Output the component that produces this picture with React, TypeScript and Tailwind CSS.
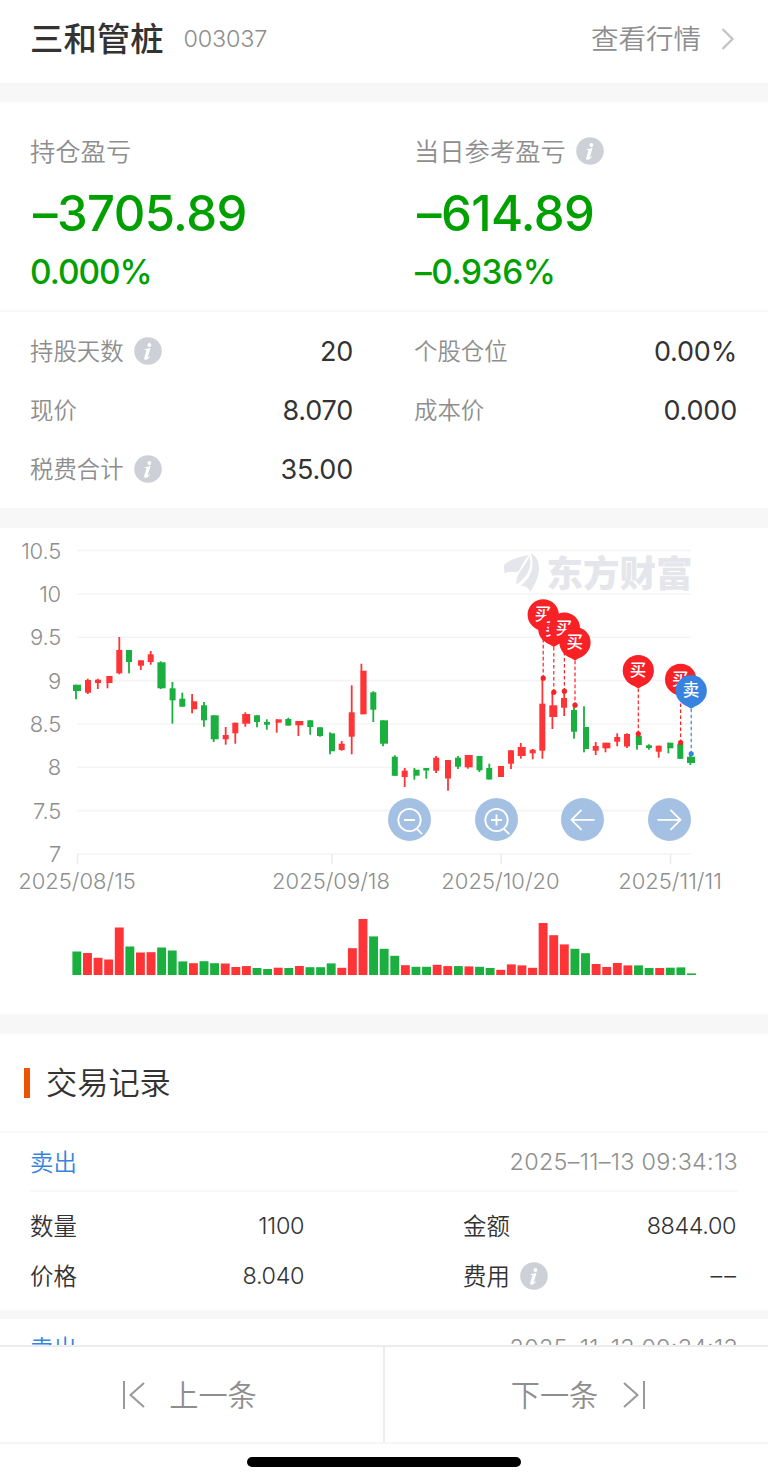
import type { ReactNode } from 'react';

const RED = '#ff3436';
const GREEN = '#1aaf3e';

type Candle = {
    c: 'r' | 'g';
    x: number; // left edge of the body
    w: number;
    open: number;
    close: number;
    wick: number;
    high: number;
    low: number;
};

const candle = (c: 'r' | 'g', x: number, w: number, open: number, close: number, wick: number, high: number, low: number): Candle =>
    ({ c, x, w, open, close, wick, high, low });

const candles: Candle[] = [
    candle('g', 73, 8, 684.7, 691, 76, 684.7, 699.3),
    candle('r', 85, 6, 680, 692.7, 87.8, 678.7, 694),
    candle('r', 95, 6, 679.7, 683, 97.8, 678.7, 689),
    candle('r', 106.5, 6, 676, 683, 107.5, 676, 688.3),
    candle('r', 116.3, 6, 650, 673.3, 119.3, 637, 674.3),
    candle('g', 126, 6, 650, 662, 129, 650, 673.3),
    candle('r', 138, 6, 660.3, 665.7, 140.8, 660.3, 670),
    candle('r', 147.7, 6, 654.3, 662, 150.7, 651, 664.7),
    candle('g', 157.4, 8.2, 662.3, 688.3, 160.7, 661.3, 689),
    candle('g', 169.6, 6, 688.3, 700.3, 172.4, 682, 723.7),
    candle('g', 179.3, 6, 698.7, 706.7, 182.3, 692.7, 706.7),
    candle('r', 191.5, 5.7, 701.3, 709.3, 192.1, 694, 713.3),
    candle('g', 201, 6, 705.3, 720.3, 203.9, 702, 726.7),
    candle('g', 210.7, 8, 715.3, 739.3, 213.7, 715.3, 742),
    candle('r', 222.7, 6, 735, 739.3, 225.7, 727, 744.7),
    candle('r', 232.3, 6, 722.7, 733.3, 235.3, 722.7, 743.7),
    candle('r', 242.2, 8, 714, 723.7, 245.3, 712.3, 726.7),
    candle('g', 254, 6, 715.3, 722, 257, 715.3, 727.3),
    candle('g', 264, 6, 722, 724.7, 266.8, 719.3, 729.7),
    candle('r', 275.7, 6, 719.3, 722.7, 276.7, 719.3, 732.7),
    candle('g', 285.3, 6, 719, 725.6, 288.3, 717.7, 725.6),
    candle('r', 295.3, 8, 721, 725.3, 298.4, 721, 736),
    candle('g', 307.3, 6, 720.3, 727, 310.2, 720.3, 734.7),
    candle('g', 317, 6, 727.3, 736, 320, 727.3, 736.7),
    candle('g', 329, 6, 733.3, 751.3, 330, 732.3, 754.3),
    candle('r', 338.7, 6, 743.7, 750, 341.7, 741, 750.7),
    candle('r', 348.7, 6, 712.3, 736.7, 351.7, 685.3, 754.3),
    candle('r', 360.6, 6, 670.7, 714.3, 361.4, 663.7, 714.3),
    candle('g', 370.3, 6, 692.3, 709.7, 373.3, 691.3, 722),
    candle('g', 380, 8, 720.3, 743.7, 383, 720.3, 746.3),
    candle('g', 391.8, 6, 756.7, 775.8, 394.8, 755.3, 775.8),
    candle('r', 401.7, 6, 770.7, 777, 404.7, 768, 787),
    candle('g', 413.6, 6, 769.7, 775.7, 414.4, 768, 779.7),
    candle('g', 423.3, 6, 768, 770.5, 426.3, 768, 778.7),
    candle('r', 433.2, 6, 757.7, 770.7, 436.1, 756, 773),
    candle('r', 445, 6, 760, 778.5, 448, 760, 790.7),
    candle('g', 455, 6, 757.7, 766.7, 458, 756, 769),
    candle('r', 464.7, 8, 755, 767.3, 467.8, 755, 768.7),
    candle('g', 476.5, 6, 756, 770.3, 479.4, 756, 772),
    candle('g', 486.2, 6, 768, 779.5, 489.3, 763.7, 779.5),
    candle('r', 498, 6, 766, 777, 501, 766, 777),
    candle('r', 508, 6, 750.3, 763.7, 511, 750.3, 769),
    candle('r', 517.7, 8, 747, 756, 520.8, 743, 758.7),
    candle('r', 529.7, 6, 749.7, 753.3, 532.7, 749, 759.3),
    candle('r', 539.3, 6, 703.7, 750.7, 542.4, 679, 758.7),
    candle('r', 549.3, 8, 705.3, 717, 552.4, 693, 729),
    candle('r', 561, 6, 698, 707.7, 564.2, 691, 716),
    candle('g', 571, 6, 710, 731.7, 574, 706, 738.7),
    candle('g', 583, 6, 727, 749, 584, 706.3, 752.3),
    candle('r', 592.7, 6, 746, 750.7, 595.7, 742, 755),
    candle('r', 602.4, 8, 742.7, 748.3, 605.5, 742.7, 752.3),
    candle('r', 614.2, 6, 737, 741.7, 617.2, 733.3, 746.3),
    candle('r', 624, 6, 734, 746.5, 627, 733.3, 748),
    candle('g', 635.8, 6, 735.7, 745, 637, 735.7, 749.7),
    candle('g', 646, 6, 745.3, 748, 648.9, 744.3, 749.7),
    candle('r', 655.7, 6, 745.7, 751.7, 658.7, 745.7, 757.7),
    candle('g', 667.4, 6, 742.7, 748.3, 668.4, 742.7, 753.3),
    candle('g', 677.3, 6, 743.7, 758.8, 680.5, 742, 758.8),
    candle('g', 687, 8, 756.7, 763, 690.3, 755.7, 765),
];

const volumes = [
    23.5, 22, 17.2, 15.5, 47.5, 28.5, 22.5, 22.8, 27.5, 24.5, 13.6, 11.8, 13.8, 11.8, 11.5, 8, 8.9, 7, 6, 7.3,
    7, 9, 7.8, 7.8, 11.6, 7.2, 26.8, 56, 38.6, 26.2, 19.2, 9.8, 8.2, 8.2, 10.2, 8.9, 8.9, 8.6, 8.2, 7,
    5.2, 10.6, 9.6, 7.2, 52, 39.8, 30.6, 26.2, 21.8, 11, 8, 12, 9.6, 9.6, 7, 7, 7.3, 7.6, 1.6,
];

const priceTicks = [
    { label: '10.5', y: 550.5 },
    { label: '10', y: 594 },
    { label: '9.5', y: 637.3 },
    { label: '9', y: 680.6 },
    { label: '8.5', y: 724 },
    { label: '8', y: 767.3 },
    { label: '7.5', y: 810.6 },
    { label: '7', y: 854 },
];

const dateTicks = [
    { label: '2025/08/15', tick: 77.5, x: 77 },
    { label: '2025/09/18', tick: 332, x: 331 },
    { label: '2025/10/20', tick: 501, x: 500.5 },
    { label: '2025/11/11', tick: 670.5, x: 670 },
];

// y = pin centre, dot = price of the trade
const trades = [
    { text: '买', x: 543.2, y: 614.8, dot: 678.2, color: '#f82126' },
    { text: '买', x: 553.8, y: 629, dot: 692.2, color: '#f82126' },
    { text: '买', x: 564.4, y: 628, dot: 691.2, color: '#f82126' },
    { text: '买', x: 575, y: 642.6, dot: 705.2, color: '#f82126' },
    { text: '买', x: 638.3, y: 670.6, dot: 733.8, color: '#f82126' },
    { text: '买', x: 680.6, y: 679.4, dot: 742.5, color: '#f82126' },
    { text: '卖', x: 691.2, y: 690.7, dot: 753.8, color: '#3883e0' },
];

function InfoIcon() {
    return (
        <svg viewBox="0 0 28 28" className="size-7 shrink-0">
            <circle cx="14" cy="14" r="13.8" fill="#cdd0d6" />
            <circle cx="15.4" cy="8" r="1.9" fill="#fff" />
            <path d="M10.6 12c1.8-.1 3.4-.5 5.4-1l.5.2-2.7 8.8c-.2.9.3.8 1.8-.9l.5.4c-1.6 2.2-3 3.3-4.4 3.3-1.3 0-1.8-.9-1.4-2.4l1.9-6.2c.3-1.1 0-1.5-1.6-1.5z" fill="#fff" />
        </svg>
    );
}

function StockChart() {
    return (
        <svg viewBox="0 528 768 486" width="768" height="486" className="block">
            {/* Axes */}
            {priceTicks.map((t) => (
                <g key={t.label}>
                    <line x1="77" x2="691" y1={t.y} y2={t.y} stroke="#f4f4f5" strokeWidth="1.6" />
                    <text x="61" y={t.y + 8} textAnchor="end" fontSize="22" fontWeight="350" letterSpacing="-0.2" fill="#8e8e8e">{t.label}</text>
                </g>
            ))}
            {dateTicks.map((t) => (
                <g key={t.label}>
                    <line x1={t.tick} x2={t.tick} y1="854" y2="864" stroke="#ececee" strokeWidth="1.6" />
                    <text x={t.x} y="889" textAnchor="middle" fontSize="22" fontWeight="350" fill="#8e8e8e">{t.label}</text>
                </g>
            ))}

            {/* Watermark */}
            <g fill="#e5e6eb">
                <path d="M504 565C510 559 521 556.5 529 555C524 560 522 566 518.5 571.5C514 573 509 570.5 504.5 573.5Z" />
                <path d="M529.5 556C527 565 516.5 571 516 584.5C526.5 578 533 568 529.5 556Z" />
                <path d="M531 553.5C536.5 556 539.5 562 539 570C538 580 533 587 530.5 592C528 586.5 524 585.5 520.5 586C531 578 535 566 531 553.5Z" />
                <text x="546.5" y="587" fontSize="36.5" fontWeight="900">东方财富</text>
            </g>

            {candles.map((k, i) => (
                <g key={i} fill={k.c === 'r' ? RED : GREEN}>
                    <rect x={k.wick - 0.9} y={k.high} width="1.8" height={k.low - k.high} />
                    <rect x={k.x} y={k.open} width={k.w} height={k.close - k.open} />
                </g>
            ))}

            {volumes.map((v, i) => (
                <rect key={i} x={72.4 + i * 10.597} y={975 - v} width="8.9" height={v} fill={candles[i].c === 'r' ? RED : GREEN} />
            ))}

            {/* Buy and sell pins */}
            {trades.map((t) => (
                <g key={t.x}>
                    <line x1={t.x} x2={t.x} y1={t.y + 18} y2={t.dot} stroke={t.color} strokeWidth="1.2" strokeDasharray="3.6 2.4" />
                    <circle cx={t.x} cy={t.dot} r="2.6" fill={t.color} />
                </g>
            ))}
            {trades.map((t) => (
                <g key={t.x}>
                    <circle cx={t.x} cy={t.y} r="15.6" fill={t.color} />
                    <path d={`M${t.x - 8} ${t.y + 13.2}L${t.x} ${t.y + 18}L${t.x + 8} ${t.y + 13.2}z`} fill={t.color} />
                    <text x={t.x - 0.3} y={t.y + 5.6} textAnchor="middle" fontSize="16.5" fontWeight="500" fill="#fff">{t.text}</text>
                </g>
            ))}
        </svg>
    );
}

function ToolButton({ children }: { children: ReactNode }) {
    return (
        <button className="size-[43px] rounded-full bg-[#a4c1e4]">
            <svg viewBox="0 0 43 43" className="size-full" fill="none" stroke="#fff" strokeWidth="1.8">
                {children}
            </svg>
        </button>
    );
}

function Stat({ label, value, info }: { label: string; value: string; info?: boolean }) {
    return (
        <div className="flex h-[59px] items-center justify-between">
            <div className="flex items-center gap-[10px] text-[23.4px] font-[350] text-[#8e8e8e]">
                <span className="translate-y-px">{label}</span>
                {info && <InfoIcon />}
            </div>
            <span className="translate-y-px text-[27px] tracking-[-0.2px] text-[#333]">{value}</span>
        </div>
    );
}

function RecordHeader() {
    return (
        <div className="mx-[30px] flex h-[59px] items-center justify-between border-b-2 border-[#f8f8f8]">
            <span className="translate-y-px text-[23.4px] font-[350] text-[#3883e0]">卖出</span>
            <span className="text-[23.4px] font-light tracking-[0.3px] text-[#8e8e8e]">2025–11–13 09:34:13</span>
        </div>
    );
}

function RecordCell({ label, value, info }: { label: string; value: ReactNode; info?: boolean }) {
    return (
        <div className="flex h-[50px] items-center justify-between text-[23.4px] font-[350] text-[#333]">
            <div className="flex items-center gap-[10px]">
                <span className="translate-y-px">{label}</span>
                {info && <InfoIcon />}
            </div>
            <span className="tracking-[-0.4px]">{value}</span>
        </div>
    );
}

export default function App() {
    return (
        <div className="flex h-[1483px] w-[768px] flex-col overflow-hidden bg-white font-['Inter','Noto_Sans_CJK_SC',sans-serif] leading-none">
            <main className="min-h-0 flex-1 overflow-hidden">
                <header className="flex h-[83px] items-center justify-between pr-[34px] pb-[6px] pl-[30px]">
                    <div className="flex items-center gap-5">
                        <h1 className="translate-y-px text-[33.4px] font-medium text-[#333]">三和管桩</h1>
                        <span className="text-[23.4px] font-light tracking-[-0.2px] text-[#8e8e8e]">003037</span>
                    </div>
                    <div className="flex items-center gap-5 text-[27.5px] font-[350] text-[#8e8e8e]">
                        <span className="translate-y-px">查看行情</span>
                        <svg viewBox="0 0 13 22" className="h-[22px] w-[13px]" fill="none" stroke="#c4c4c4" strokeWidth="2.4">
                            <path d="M1.5 1L11.5 11L1.5 21" />
                        </svg>
                    </div>
                </header>
                <div className="h-[19px] bg-[#f7f7f7]" />

                {/* Profit and loss */}
                <section className="grid h-[210px] grid-cols-[384px_354px] border-b-2 border-[#f8f8f8] pt-[35px] pl-[30px] font-medium text-[#00a000]">
                    <div>
                        <div className="flex h-7 items-center text-[25.3px] font-[350] text-[#8e8e8e]">
                            <span className="translate-y-px">持仓盈亏</span>
                        </div>
                        <div className="mt-6 pl-[3px] text-[49px] tracking-[-0.6px]">–3705.89</div>
                        <div className="mt-[18px] text-[33.4px] tracking-[-1px]">0.000%</div>
                    </div>
                    <div>
                        <div className="flex h-7 items-center gap-[10px] text-[25.3px] font-[350] text-[#8e8e8e]">
                            <span className="translate-y-px">当日参考盈亏</span>
                            <InfoIcon />
                        </div>
                        <div className="mt-6 pl-[3px] text-[49px] tracking-[-0.6px]">–614.89</div>
                        <div className="mt-[18px] pl-px text-[33.4px] tracking-[-0.4px]">–0.936%</div>
                    </div>
                </section>
                <section className="grid h-[196px] grid-cols-[323px_323px] content-start gap-x-[61px] pt-[9px] pl-[30px]">
                    <Stat label="持股天数" value="20" info />
                    <Stat label="个股仓位" value="0.00%" />
                    <Stat label="现价" value="8.070" />
                    <Stat label="成本价" value="0.000" />
                    <Stat label="税费合计" value="35.00" info />
                </section>
                <div className="h-5 bg-[#f7f7f7]" />

                <section className="relative h-[486px]">
                    <StockChart />
                    <div className="absolute top-[269.5px] left-[388px] flex gap-[43.6px]">
                        <ToolButton>
                            <circle cx="21.5" cy="22" r="11.2" />
                            <path d="M16 22h11M28.8 30.8l5.4 5.4" />
                        </ToolButton>
                        <ToolButton>
                            <circle cx="21.5" cy="22" r="11.2" />
                            <path d="M16 22h11M21.5 16.5v11M28.8 30.8l5.4 5.4" />
                        </ToolButton>
                        <ToolButton>
                            <path d="M33.5 21.8H10.5M20.5 11.8l-10 10l10 10" />
                        </ToolButton>
                        <ToolButton>
                            <path d="M9.5 21.8h23M22.5 11.8l10 10l-10 10" />
                        </ToolButton>
                    </div>
                </section>
                <div className="h-5 bg-[#f7f7f7]" />

                {/* Trade records */}
                <section>
                    <div className="flex h-[99px] items-center gap-4 border-b-2 border-[#f8f8f8] pl-6">
                        <span className="h-[30px] w-[6px] bg-[#ea5404]" />
                        <h2 className="translate-y-px text-[31.2px] font-[350] text-[#333]">交易记录</h2>
                    </div>
                    <RecordHeader />
                    <div className="grid h-[118px] grid-cols-[274px_273px] content-start gap-x-[159px] pt-[9px] pl-[30px]">
                        <RecordCell label="数量" value="1100" />
                        <RecordCell label="金额" value="8844.00" />
                        <RecordCell label="价格" value="8.040" />
                        <RecordCell label="费用" value={<span className="-mr-[2px] tracking-[2px]">––</span>} info />
                    </div>
                </section>
                <div className="h-[9px] bg-[#f7f7f7]" />
                <RecordHeader />
            </main>

            <footer className="h-[138px] border-t-2 border-[#ececec] bg-white">
                <div className="flex h-[97px] border-b-2 border-[#f5f5f5] text-[29.2px] font-[350] text-[#8e8e8e]">
                    <button className="flex w-[385px] items-center justify-center gap-[23px] border-r-2 border-[#ececec] pr-1">
                        <svg viewBox="0 0 24 28" className="h-7 w-6" fill="none" stroke="#999" strokeWidth="2">
                            <path d="M2 0v28M22 2L8.5 14L22 26" />
                        </svg>
                        <span className="translate-y-px">上一条</span>
                    </button>
                    <button className="flex flex-1 items-center justify-center gap-[24px] pl-1">
                        <span className="translate-y-px">下一条</span>
                        <svg viewBox="0 0 24 28" className="h-7 w-6" fill="none" stroke="#999" strokeWidth="2">
                            <path d="M22 0v28M2 2L15.5 14L2 26" />
                        </svg>
                    </button>
                </div>
                <div className="mx-auto mt-[13px] h-[10px] w-[274px] rounded-full bg-black" />
            </footer>
        </div>
    );
}
